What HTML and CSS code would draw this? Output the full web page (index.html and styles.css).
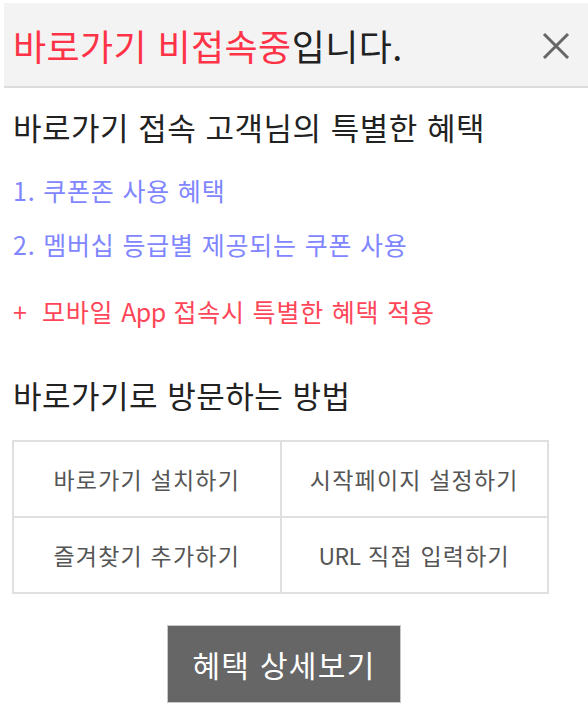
FILE: index.html
```html
<!DOCTYPE html>
<html lang="ko">
<head>
  <meta charset="UTF-8" />
  <meta name="viewport" content="width=device-width, initial-scale=1.0" />
  <title>바로가기 비접속중</title>
  <link rel="stylesheet" href="styles.css">
</head>
<body>
  <div class="popup">
    <div class="popup-head">
      <h1 class="title"><span class="accent">바로가기 비접속중</span>입니다.</h1>
      <button class="close-btn" aria-label="닫기">
        <svg width="28" height="28" viewBox="0 0 28 28">
          <path d="M2 2 L26 26 M26 2 L2 26" stroke="#666" stroke-width="3" fill="none" />
        </svg>
      </button>
    </div>

    <div class="popup-body">
      <h2 class="section-title">바로가기 접속 고객님의 특별한 혜택</h2>
      <ul class="benefits">
        <li>1. 쿠폰존 사용 혜택</li>
        <li>2. 멤버십 등급별 제공되는 쿠폰 사용</li>
      </ul>
      <p class="extra"><span class="plus">+</span>모바일 <span class="latin">App</span> 접속시 특별한 혜택 적용</p>

      <h2 class="section-title second">바로가기로 방문하는 방법</h2>
      <div class="methods">
        <a href="#" class="method">바로가기 설치하기</a>
        <a href="#" class="method">시작페이지 설정하기</a>
        <a href="#" class="method">즐겨찾기 추가하기</a>
        <a href="#" class="method"><span class="latin">URL</span>&nbsp;직접 입력하기</a>
      </div>

      <div class="actions">
        <button class="detail-btn">혜택 상세보기</button>
      </div>
    </div>
  </div>
</body>
</html>
```

FILE: styles.css
```css
body {
  margin: 0;
  font-family: "Noto Sans CJK KR", "Noto Sans", sans-serif;
  background: #fff;
  color: #222;
}

.popup {
  padding-top: 3px;
}

.popup-head {
  margin-left: 4px;
  height: 83px;
  background: #f3f3f3;
  border-bottom: 2px solid #dcdcdc;
  display: flex;
  align-items: center;
  justify-content: space-between;
  padding: 0 18px 0 9px;
}

.title {
  margin: 0;
  font-size: 36px;
  font-weight: 400;
  color: #222;
  letter-spacing: 0.4px;
}

.title .accent {
  color: #ff3347;
}

.close-btn {
  background: none;
  border: none;
  padding: 0;
  margin-top: 2px;
  cursor: pointer;
  display: flex;
}

.popup-body {
  padding: 0 0 0 12px;
}

.section-title {
  margin: 19px 0 0 1px;
  font-size: 31px;
  font-weight: 400;
  line-height: 40px;
  color: #222;
  letter-spacing: 0.5px;
}

.section-title.second {
  margin-top: 47px;
}

.benefits {
  list-style: none;
  margin: 26px 0 0 1px;
  padding: 0;
}

.benefits li {
  font-size: 25px;
  line-height: 34px;
  color: #7f86ff;
  letter-spacing: 0.8px;
}

.benefits li + li {
  margin-top: 20px;
}

.extra {
  margin: 33px 0 0 1px;
  font-size: 25px;
  line-height: 34px;
  color: #ff4658;
  letter-spacing: 0.8px;
}

.plus {
  display: inline-block;
  width: 29px;
}

.latin {
  letter-spacing: -0.6px;
}

.methods {
  margin-top: 25px;
  width: 533px;
  display: grid;
  grid-template-columns: 1fr 1fr;
  gap: 2px;
  padding: 2px;
  background: #e0e0e0;
}

.method {
  height: 74px;
  background: #fff;
  display: flex;
  align-items: center;
  justify-content: center;
  font-size: 23px;
  color: #555;
  text-decoration: none;
  letter-spacing: 1.2px;
}

.actions {
  width: 544px;
  margin-top: 31px;
  display: flex;
  justify-content: center;
}

.detail-btn {
  width: 234px;
  height: 78px;
  background: #666;
  border: 1px solid #c8c8c8;
  color: #fff;
  font-family: inherit;
  font-size: 30px;
  letter-spacing: 1.3px;
  cursor: pointer;
}
```
